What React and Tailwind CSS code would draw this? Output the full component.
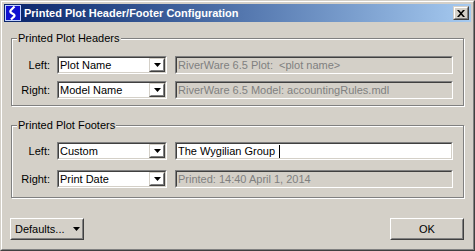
import React from "react";

const font = { fontFamily: '"Liberation Sans", Arial, sans-serif' };

function Sunken({ className = "", children }) {
  return (
    <div className={"border border-t-[#808080] border-l-[#808080] border-b-white border-r-white " + className}>
      <div className="h-full border border-t-[#404040] border-l-[#404040] border-b-[#d4d0c8] border-r-[#d4d0c8]">
        {children}
      </div>
    </div>
  );
}

function Raised({ className = "", children }) {
  return (
    <div className={"border border-t-[#d4d0c8] border-l-[#d4d0c8] border-b-[#404040] border-r-[#404040] " + className}>
      <div className="h-full border border-t-white border-l-white border-b-[#808080] border-r-[#808080] flex items-center justify-center">
        {children}
      </div>
    </div>
  );
}

function Tri({ className = "" }) {
  return (
    <svg width="7" height="4" viewBox="0 0 7 4" className={className}>
      <path d="M0 0h7L3.5 4z" fill="#000" />
    </svg>
  );
}

function Combo({ value }) {
  return (
    <Sunken className="w-[110px] h-[18px]">
      <div className="flex h-full bg-white">
        <div className="flex-1 pl-[1px] text-[11px] leading-[14px] text-black">{value}</div>
        <Raised className="w-[16px] h-full">
          <Tri />
        </Raised>
      </div>
    </Sunken>
  );
}

function Field({ value, enabled = false, caret = false }) {
  return (
    <Sunken className="w-[278px] h-[18px]">
      <div
        className={
          "h-full pl-[1px] text-[11px] leading-[14px] flex items-center " +
          (enabled ? "bg-white text-black" : "bg-[#d4d0c8] text-[#808080]")
        }
      >
        <span className="whitespace-pre">{value}</span>
        {caret && <span className="inline-block w-[1px] h-[13px] bg-black ml-[1px]" />}
      </div>
    </Sunken>
  );
}

function Row({ label, combo, field, enabled, caret }) {
  return (
    <div className="flex items-center h-[18px]">
      <div className="w-[38px] text-right text-[11px] text-black">{label}</div>
      <div className="ml-[7px]">
        <Combo value={combo} />
      </div>
      <div className="ml-[8px]">
        <Field value={field} enabled={enabled} caret={caret} />
      </div>
    </div>
  );
}

function Group({ title, children, className = "" }) {
  return (
    <div
      className={
        "relative border border-[#808080] shadow-[inset_1px_1px_0_#fff,1px_1px_0_#fff] " + className
      }
    >
      <div className="absolute left-[5px] top-[-8px] bg-[#d4d0c8] px-[1px] text-[11px] leading-[14px] text-black">
        {title}
      </div>
      {children}
    </div>
  );
}

function Logo() {
  return (
    <svg width="16" height="16" viewBox="0 0 16 16">
      <rect x="0" y="0" width="16" height="16" fill="#c0d0ff" />
      <rect x="1" y="1" width="14" height="14" fill="#1010d0" />
      <path
        d="M9.5 1.5 L6 5 C5 6 5 7 6.5 8 L9 9.5 C10 10.5 9.5 11.5 8 12.5 L6 14.5"
        stroke="#fff"
        strokeWidth="2.2"
        fill="none"
      />
    </svg>
  );
}

export default function App() {
  return (
    <div style={font} className="w-[475px] h-[251px] bg-[#d4d0c8] select-none">
      <div className="w-full h-full border border-t-[#d4d0c8] border-l-[#d4d0c8] border-b-[#404040] border-r-[#404040]">
        <div className="w-full h-full border border-t-white border-l-white border-b-[#808080] border-r-[#808080] p-[2px] flex flex-col">
          {/* title bar */}
          <div className="h-[18px] flex items-center bg-gradient-to-r from-[#0a246a] to-[#a6caf0] pl-[1px] pr-[2px]">
            <Logo />
            <div className="ml-[3px] text-white font-bold text-[11px] leading-[14px] flex-1">
              Printed Plot Header/Footer Configuration
            </div>
            <Raised className="w-[16px] h-[14px] bg-[#d4d0c8]">
              <svg width="8" height="7" viewBox="0 0 8 7">
                <path d="M0 0h2l2 2.2L6 0h2L5 3.5 8 7H6L4 4.8 2 7H0l3-3.5z" fill="#000" />
              </svg>
            </Raised>
          </div>

          {/* body */}
          <div className="flex-1 px-[7px] pt-[16px] flex flex-col">
            <Group title="Printed Plot Headers" className="h-[68px] pt-[17px]">
              <div className="flex flex-col gap-[7px]">
                <Row label="Left:" combo="Plot Name" field="RiverWare 6.5 Plot:  <plot name>" />
                <Row label="Right:" combo="Model Name" field="RiverWare 6.5 Model: accountingRules.mdl" />
              </div>
            </Group>

            <Group title="Printed Plot Footers" className="mt-[19px] h-[73px] pt-[16px]">
              <div className="flex flex-col gap-[10px]">
                <Row label="Left:" combo="Custom" field="The Wygilian Group " enabled caret />
                <Row label="Right:" combo="Print Date" field="Printed: 14:40 April 1, 2014" />
              </div>
            </Group>

            <div className="mt-[20px] flex justify-between">
              <div className="ml-[-1px] w-[74px] h-[22px] border border-t-white border-l-white border-b-[#404040] border-r-[#404040]">
                <div className="h-full border border-transparent border-b-[#808080] border-r-[#808080] flex items-center pl-[3px] text-[11px] text-black">
                  <span>Defaults...</span>
                  <Tri className="ml-[8px]" />
                </div>
              </div>
              <div className="w-[74px] h-[22px] border border-t-white border-l-white border-b-[#404040] border-r-[#404040]">
                <div className="h-full border border-transparent border-b-[#808080] border-r-[#808080] flex items-center justify-center text-[11px] text-black">
                  OK
                </div>
              </div>
            </div>
          </div>
        </div>
      </div>
    </div>
  );
}
